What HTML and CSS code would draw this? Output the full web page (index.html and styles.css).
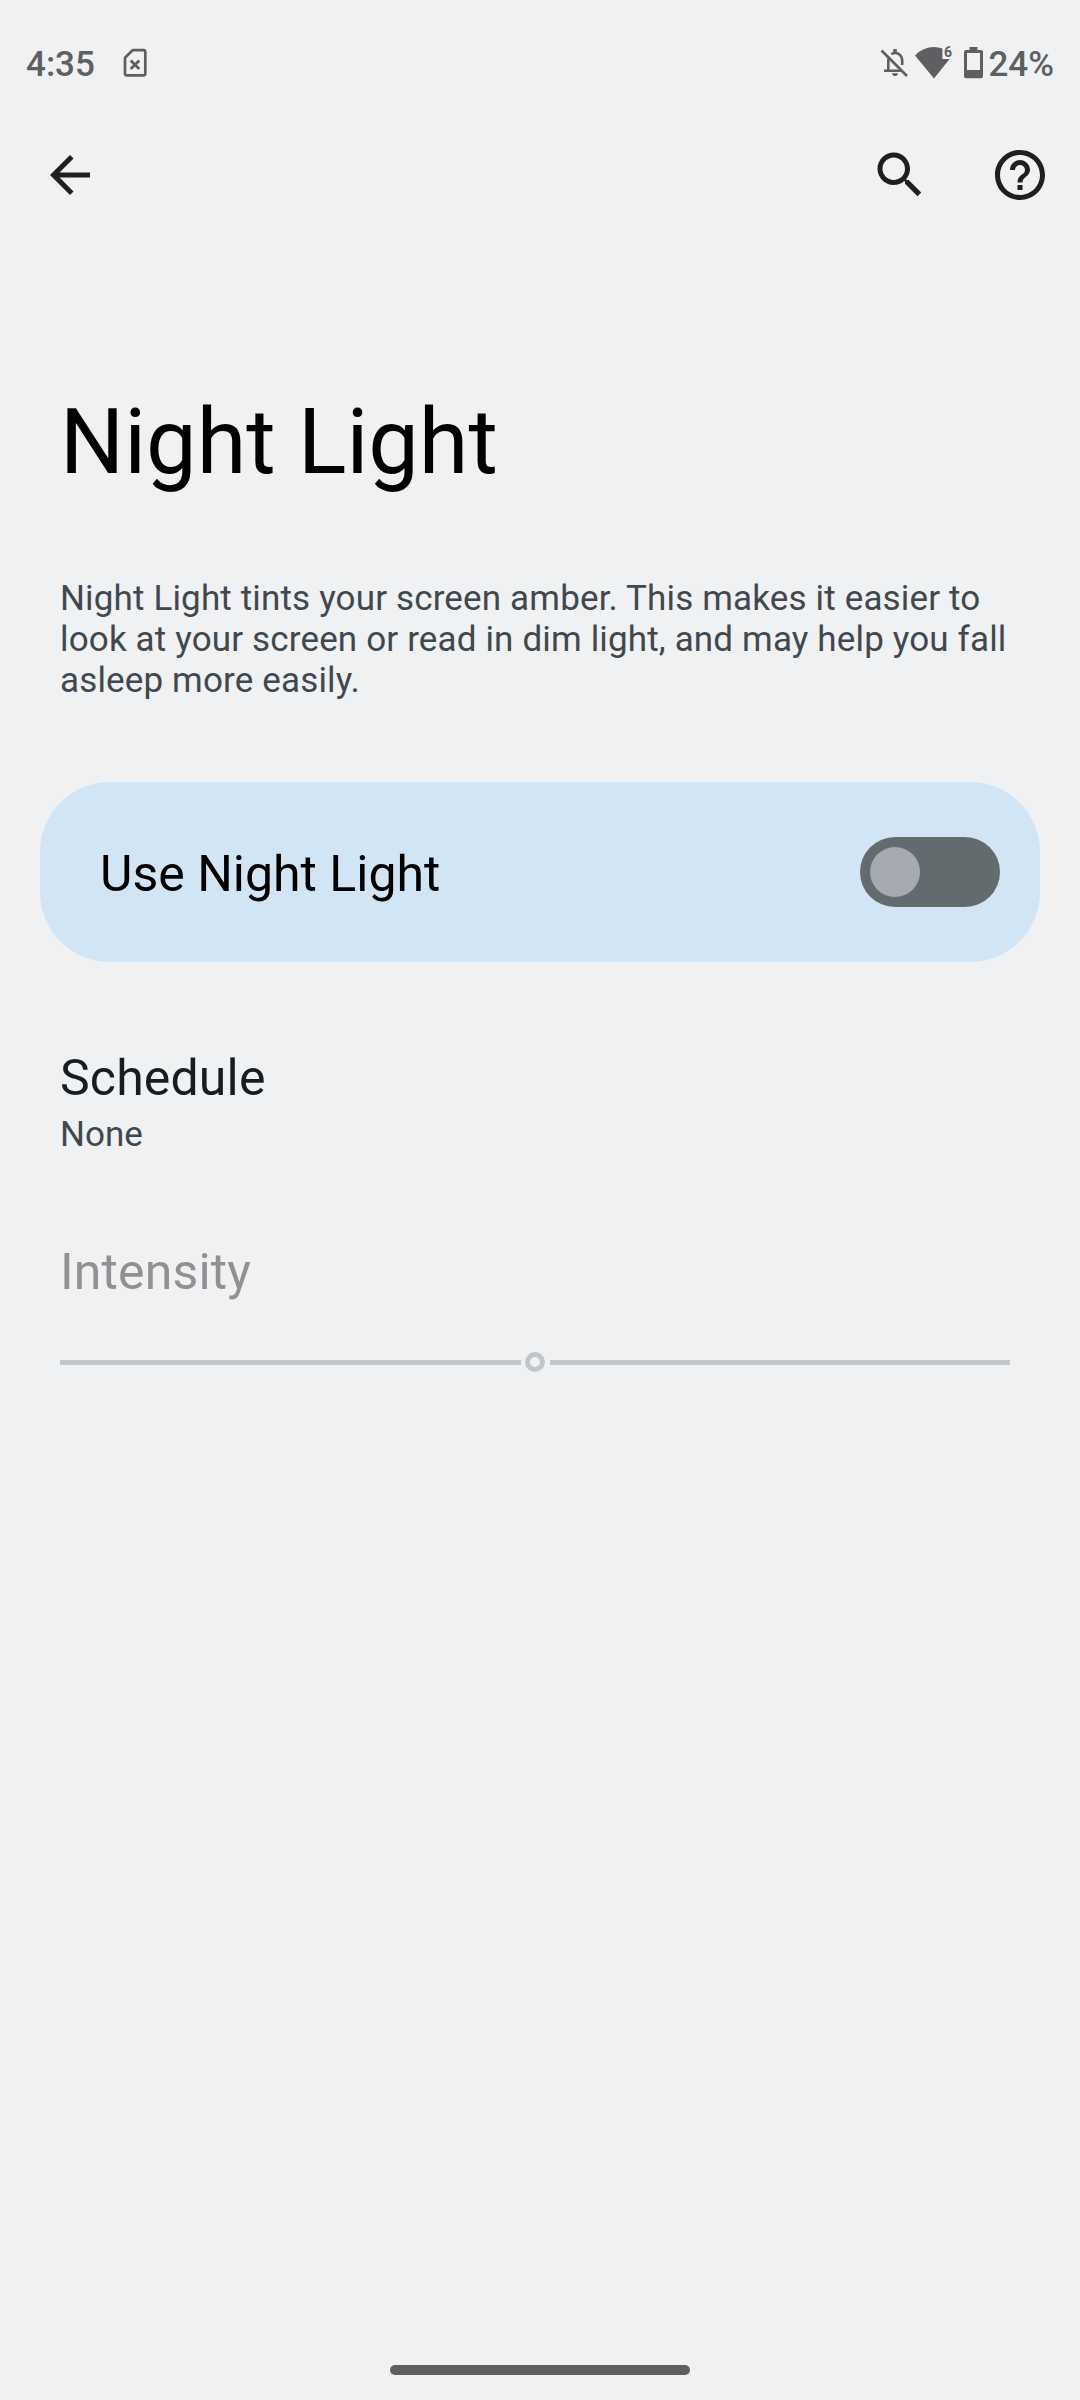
FILE: index.html
```
<!DOCTYPE html>
<html lang="en">
<head>
    <meta charset="UTF-8">
    <meta name="viewport" content="width=device-width, initial-scale=1.0">
    <title>Night Light</title>
    <link rel="stylesheet" href="styles.css">
</head>
<body>
    <div class="status-bar">
        <span class="clock">4:35</span>
        <svg class="icon-sim" width="26" height="32" viewBox="0 0 26 32" fill="none" stroke="currentColor">
            <path d="M10.6 3.2H21.5Q23.3 3.2 23.3 5V26.5Q23.3 28.3 21.5 28.3H4.8Q3 28.3 3 26.5V10.8Z" stroke-width="2.7" stroke-linejoin="round"/>
            <path d="M8.7 13.4L17.3 22M17.3 13.4L8.7 22" stroke-width="2.8"/>
        </svg>
        <div class="status-right">
            <svg class="icon-bell" width="30" height="32" viewBox="0 0 30 32" fill="none" stroke="currentColor" stroke-width="2.6">
                <path d="M1.5 3.5L27 29"/>
                <path d="M4 23.7H22M8.3 23V14Q8.3 11.5 9.5 9.8M11.3 7.2Q15 4.8 18.8 7Q22.2 9.4 22.2 14V18"/>
                <path d="M15 2V6" stroke-width="3.6"/>
                <path d="M12 26.2H18Q17.6 29 15 29T12 26.2Z" fill="currentColor" stroke="none"/>
            </svg>
            <svg class="icon-wifi" width="38" height="40" viewBox="0 -4 38 40" fill="currentColor">
                <path d="M0 8.5Q8 0 19 0Q23.5 0 27.4 1.5V12H34.6L19 31.5Z"/>
                <text class="wifi-gen" x="29" y="10">6</text>
            </svg>
            <svg class="icon-battery" width="19" height="32" viewBox="0 0 19 32" fill="currentColor" fill-rule="evenodd">
                <path d="M5.5 0H13.5V3H17Q19 3 19 5V29.3Q19 31.3 17 31.3H2Q0 31.3 0 29.3V5Q0 3 2 3H5.5ZM3 6V23H16V6Z"/>
            </svg>
            <span class="battery-level">24%</span>
        </div>
    </div>

    <header class="toolbar">
        <svg width="60" height="60" viewBox="0 0 24 24" fill="currentColor">
            <path d="M20 11H7.83l5.59-5.59L12 4l-8 8 8 8 1.41-1.41L7.83 13H20v-2z"/>
        </svg>
        <svg class="icon-search" width="60" height="60" viewBox="0 0 24 24" fill="currentColor">
            <path d="M15.5 14h-.79l-.28-.27C15.41 12.59 16 11.11 16 9.5 16 5.91 13.09 3 9.5 3S3 5.91 3 9.5 5.91 16 9.5 16c1.61 0 3.09-.59 4.23-1.57l.27.28v.79l5 4.99L20.49 19l-4.99-5zm-6 0C7.01 14 5 11.99 5 9.5S7.01 5 9.5 5 14 7.01 14 9.5 11.99 14 9.5 14z"/>
        </svg>
        <svg width="60" height="60" viewBox="0 0 24 24" fill="currentColor">
            <path d="M11 18h2v-2h-2v2zm1-16C6.48 2 2 6.48 2 12s4.48 10 10 10 10-4.48 10-10S17.52 2 12 2zm0 18c-4.41 0-8-3.59-8-8s3.59-8 8-8 8 3.59 8 8-3.59 8-8 8zm0-14c-2.21 0-4 1.79-4 4h2c0-1.1.9-2 2-2s2 .9 2 2c0 2-3 1.75-3 5h2c0-2.25 3-2.5 3-5 0-2.21-1.79-4-4-4z"/>
        </svg>
    </header>

    <main>
        <h1>Night Light</h1>
        <p class="summary">Night Light tints your screen amber. This makes it easier to look at your screen or read in dim light, and may help you fall asleep more easily.</p>

        <div class="main-switch">
            <span class="main-switch-label">Use Night Light</span>
            <div class="switch">
                <div class="thumb"></div>
            </div>
        </div>

        <div class="preference">
            <h2>Schedule</h2>
            <p>None</p>
        </div>

        <div class="preference disabled">
            <h2>Intensity</h2>
            <div class="slider">
                <div class="track"></div>
                <div class="slider-thumb"></div>
                <div class="track"></div>
            </div>
        </div>
    </main>

    <footer class="nav-bar">
        <div class="nav-handle"></div>
    </footer>
</body>
</html>
```

FILE: styles.css
```
* {
    box-sizing: border-box;
}

body {
    margin: 0;
    height: 2400px;
    display: flex;
    flex-direction: column;
    font-family: Roboto, sans-serif;
    background: #eff1f3;
    color: #191c1e;
}

h1, h2, p {
    margin: 0;
    font-weight: 400;
}

svg {
    display: block;
    flex: none;
}

/* Status bar */
.status-bar {
    height: 125px;
    padding: 0 26px;
    display: flex;
    align-items: center;
    color: #5f5f61;
    font-size: 35px;
    font-weight: 500;
    line-height: 41px;
}

.clock,
.battery-level {
    padding-top: 3px;
}

.icon-sim {
    margin-left: 27px;
}

.status-right {
    margin-left: auto;
    display: flex;
    align-items: center;
}

.icon-wifi {
    margin-left: 5px;
}

.wifi-gen {
    font-size: 14px;
    font-weight: 700;
}

.icon-battery {
    margin: 0 5px 0 11px;
}

/* Toolbar */
.toolbar {
    height: 100px;
    padding: 0 30px 0 40px;
    display: flex;
    align-items: center;
    color: #1f1f1f;
}

.icon-search {
    margin-left: auto;
    margin-right: 60px;
}

/* Content */
main {
    flex: 1;
    padding: 165px 40px 0;
}

h1 {
    padding: 0 20px;
    font-size: 90px;
    line-height: 106px;
    color: #000;
}

.summary {
    margin-top: 82px;
    padding: 0 10px 0 20px;
    font-size: 35px;
    line-height: 41px;
    letter-spacing: 0.15px;
    color: #41484d;
}

.main-switch {
    margin-top: 81px;
    height: 180px;
    padding: 0 40px 0 60px;
    display: flex;
    align-items: center;
    justify-content: space-between;
    background: #d2e5f4;
    border-radius: 70px;
}

.main-switch-label {
    padding-top: 4px;
    font-size: 50px;
    line-height: 58px;
    color: #000;
}

.switch {
    width: 140px;
    height: 70px;
    padding: 10px;
    border-radius: 35px;
    background: #646b6e;
}

.thumb {
    width: 50px;
    height: 50px;
    border-radius: 50%;
    background: #a6abb3;
}

.preference {
    margin-top: 87px;
    padding: 0 30px 0 20px;
}

.preference h2 {
    font-size: 50px;
    line-height: 58px;
    letter-spacing: 0.15px;
}

.preference p {
    margin-top: 7px;
    font-size: 35px;
    line-height: 41px;
    color: #41484d;
}

.preference.disabled {
    margin-top: 88px;
}

.disabled h2 {
    color: #909193;
}

.slider {
    margin-top: 51px;
    display: flex;
    align-items: center;
    gap: 4.5px;
}

.track {
    flex: 1;
    height: 5px;
    background: #c3c6c9;
}

.slider-thumb {
    width: 20px;
    height: 20px;
    border: 5px solid #c3c6c9;
    border-radius: 50%;
}

/* Gesture navigation */
.nav-bar {
    height: 60px;
    display: flex;
    align-items: center;
    justify-content: center;
}

.nav-handle {
    width: 300px;
    height: 10px;
    border-radius: 5px;
    background: #5f5f61;
}
```
